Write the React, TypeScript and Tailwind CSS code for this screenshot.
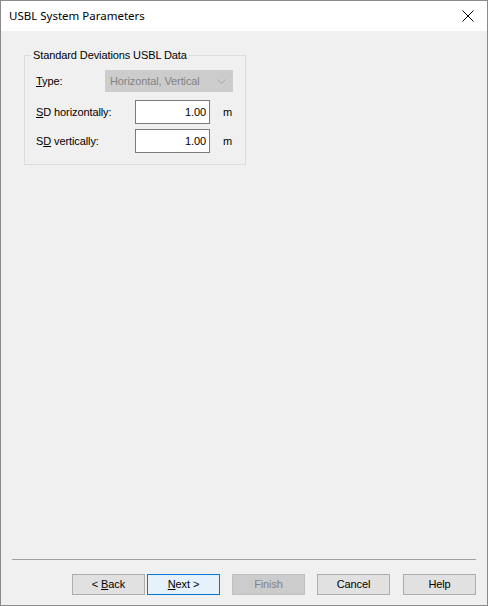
import React from "react";

const body = { fontFamily: '"Liberation Sans", Arial, sans-serif' } as const;

function Btn({ children, variant = "normal" }: { children: React.ReactNode; variant?: "normal" | "default" | "disabled" }) {
  const cls =
    variant === "default"
      ? "bg-[#e5f1fb] border-[#0078d7] text-black"
      : variant === "disabled"
      ? "bg-[#cccccc] border-[#bfbfbf] text-[#838383]"
      : "bg-[#e1e1e1] border-[#adadad] text-black";
  return (
    <div className={`w-[73px] h-[21px] border flex items-center justify-center text-[11px] tracking-[-0.1px] ${cls}`}>
      <span className="whitespace-pre">{children}</span>
    </div>
  );
}

export default function App() {
  return (
    <div className="w-[488px] h-[606px] border border-[#8a8a8a] flex flex-col bg-white tracking-[-0.1px]" style={body}>
      <div className="h-[30px] flex items-center justify-between pl-[8px] pr-[9px] bg-white">
        <span className="text-[11.5px] tracking-normal text-black" style={{ fontFamily: '"Noto Sans", "Open Sans", sans-serif' }}>
          USBL System Parameters
        </span>
        <svg width="12" height="12" viewBox="0 0 12 12" className="mr-[4px]">
          <path d="M0.5 0.5 L11.5 11.5 M11.5 0.5 L0.5 11.5" stroke="#000" strokeWidth="1" />
        </svg>
      </div>
      <div className="flex-1 bg-[#f0f0f0] flex flex-col">
        <div className="ml-[23px] mt-[24px] w-[222px] h-[110px] border border-[#dcdcdc] flex flex-col">
          <span className="-mt-[7px] ml-[6px] px-[2px] w-fit bg-[#f0f0f0] text-[11px] leading-[13px] text-black">
            Standard Deviations USBL Data
          </span>
          <div className="mt-[8px] ml-[11px] flex items-center h-[22px]">
            <span className="w-[69px] text-[11px] text-black pt-[1px]"><u>T</u>ype:</span>
            <div className="w-[128px] h-[22px] bg-[#cccccc] border border-[#cccccc] flex items-center justify-between pl-[4px] pr-[6px]">
              <span className="text-[11px] text-[#838383]">Horizontal, Vertical</span>
              <svg width="9" height="5" viewBox="0 0 9 5">
                <path d="M0.5 0.5 L4.5 4.5 L8.5 0.5" stroke="#a8a8a8" fill="none" strokeWidth="1" />
              </svg>
            </div>
          </div>
          <div className="mt-[8px] ml-[11px] flex items-center h-[24px]">
            <span className="w-[99px] text-[11px] text-black"><u>S</u>D horizontally:</span>
            <div className="w-[75px] h-[24px] bg-white border border-[#7a7a7a] flex items-center justify-end pr-[3px] text-[11px] text-black">1.00</div>
            <span className="ml-[13px] text-[11px] text-black">m</span>
          </div>
          <div className="mt-[5px] ml-[11px] flex items-center h-[24px]">
            <span className="w-[99px] text-[11px] text-black">S<u>D</u> vertically:</span>
            <div className="w-[75px] h-[24px] bg-white border border-[#7a7a7a] flex items-center justify-end pr-[3px] text-[11px] text-black">1.00</div>
            <span className="ml-[13px] text-[11px] text-black">m</span>
          </div>
        </div>
        <div className="flex-1" />
        <div className="mx-[11px] h-[1px] bg-[#a0a0a0]" />
        <div className="mt-[14px] mb-[10px] pr-[11px] flex justify-end">
          <Btn>{"< "}<u>B</u>ack</Btn>
          <div className="ml-[2px]"><Btn variant="default"><u>N</u>{"ext >"}</Btn></div>
          <div className="ml-[12px]"><Btn variant="disabled">Finish</Btn></div>
          <div className="ml-[12px]"><Btn>Cancel</Btn></div>
          <div className="ml-[13px]"><Btn>Help</Btn></div>
        </div>
      </div>
    </div>
  );
}
